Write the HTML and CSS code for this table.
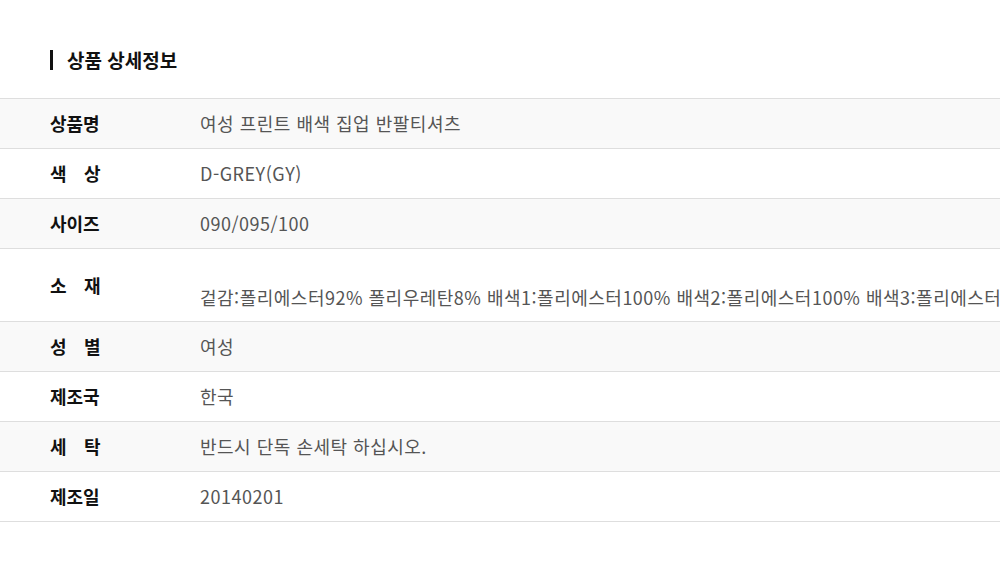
FILE: index.html
```html
<!DOCTYPE html>
<html lang="ko">
<head>
    <meta charset="UTF-8">
    <meta name="viewport" content="width=device-width, initial-scale=1.0">
    <title>상품 상세정보</title>
    <link rel="stylesheet" href="styles.css">
</head>
<body>

    <div class="detail">
        <h2 class="title">상품 상세정보</h2>
        <div class="info">
            <div class="row gray">
                <div class="label">상품명</div>
                <div class="value">여성 프린트 배색 집업 반팔티셔츠</div>
            </div>
            <div class="row">
                <div class="label"><span class="spread">색</span>상</div>
                <div class="value">D-GREY(GY)</div>
            </div>
            <div class="row gray">
                <div class="label">사이즈</div>
                <div class="value">090/095/100</div>
            </div>
            <div class="row tall">
                <div class="label"><span class="spread">소</span>재</div>
                <div class="value">겉감:폴리에스터92% 폴리우레탄8% 배색1:폴리에스터100% 배색2:폴리에스터100% 배색3:폴리에스터100%</div>
            </div>
            <div class="row gray">
                <div class="label"><span class="spread">성</span>별</div>
                <div class="value">여성</div>
            </div>
            <div class="row">
                <div class="label">제조국</div>
                <div class="value">한국</div>
            </div>
            <div class="row gray">
                <div class="label"><span class="spread">세</span>탁</div>
                <div class="value">반드시 단독 손세탁 하십시오.</div>
            </div>
            <div class="row">
                <div class="label">제조일</div>
                <div class="value">20140201</div>
            </div>
        </div>
    </div>

</body>
</html>
```

FILE: styles.css
```css
body { margin: 0; font-family: "Noto Sans CJK KR", "Noto Sans", sans-serif; background: #fff; color: #111; overflow: hidden; }
.detail { padding-top: 50px; }
.title { margin: 0 0 28px 50px; padding-left: 14px; border-left: 3px solid #111; font-size: 19px; font-weight: bold; line-height: 20px; height: 20px; }
.info { border-top: 1px solid #dedede; }
.row { display: flex; align-items: center; height: 49px; border-bottom: 1px solid #dedede; padding-left: 50px; white-space: nowrap; }
.row.gray { background: #f9f9f9; }
.row.tall { height: 72px; }
.row.tall .value { margin-top: 24px; }
.label { width: 150px; flex-shrink: 0; font-size: 18px; font-weight: bold; line-height: 25px; }
.spread { display: inline-block; width: 34px; }
.value { font-size: 18px; letter-spacing: 0.5px; color: #555; line-height: 25px; }
```
